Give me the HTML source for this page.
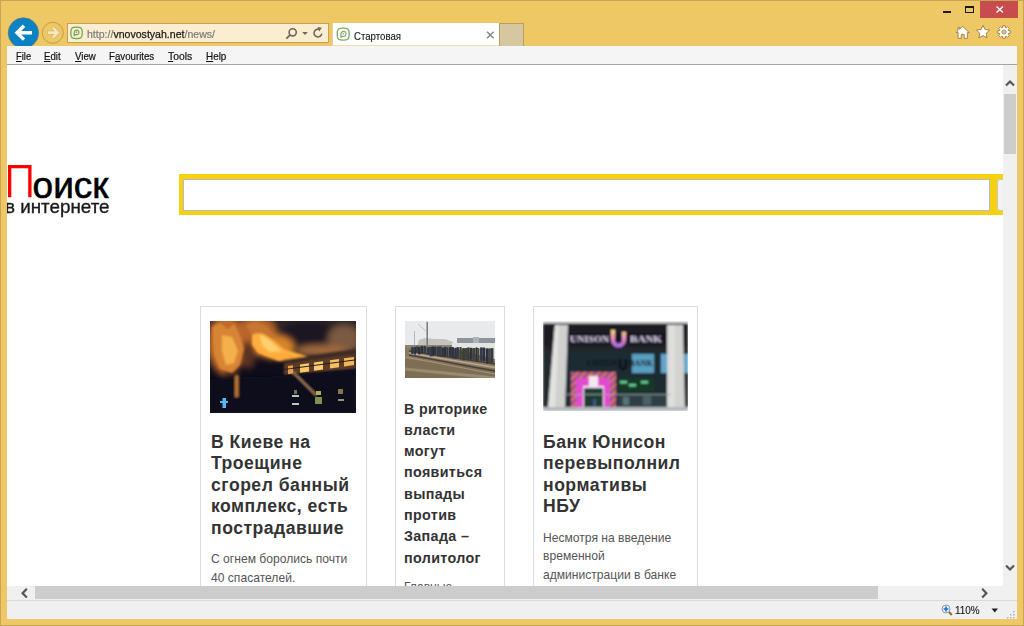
<!DOCTYPE html>
<html><head><meta charset="utf-8">
<style>
*{margin:0;padding:0;box-sizing:border-box}
html,body{width:1024px;height:626px;overflow:hidden;background:#EFC866;font-family:"Liberation Sans",sans-serif}
.abs{position:absolute}
svg{position:absolute;overflow:visible}
#frame{position:absolute;left:0;top:0;width:1024px;height:626px;background:#EFC866;border:1px solid #C9A457}
#menubar{position:absolute;left:7px;top:46px;width:1010px;height:19px;background:#F5F5F5;border-bottom:1px solid #A3A3A3}
.mi{position:absolute;top:3.5px;font-size:11px;line-height:12px;color:#111;-webkit-text-stroke:0.2px #111;transform-origin:0 0;white-space:nowrap}
.mi u{text-decoration:underline;text-underline-offset:1px;text-decoration-thickness:1px}
#content{position:absolute;left:7px;top:65px;width:996px;height:521px;background:#fff;overflow:hidden}
#vscroll{position:absolute;left:1003px;top:65px;width:14px;height:521px;background:#F0F0F0}
#hscroll{position:absolute;left:7px;top:586px;width:1010px;height:14px;background:#F0F0F0}
#status{position:absolute;left:7px;top:600px;width:1010px;height:19px;background:#F0F0F0;border-top:1px solid #DADADA}
.card{position:absolute;top:241px;border:1px solid #DDDDDD;background:#fff;height:300px}
.card h3{position:absolute;font-weight:bold;font-size:17.6px;line-height:21.4px;color:#333;letter-spacing:0.5px}
.card p{position:absolute;font-size:12.1px;line-height:18.4px;color:#555}
</style></head><body>
<div id="frame"></div>
<!-- window controls -->
<div class="abs" style="left:943px;top:11px;width:8px;height:2px;background:#1a1a1a"></div>
<div class="abs" style="left:965px;top:6px;width:9px;height:7px;border:1px solid #1a1a1a;border-top-width:2px"></div>
<div class="abs" style="left:980px;top:1px;width:38px;height:17px;background:#C84B4D"></div>
<svg style="left:996px;top:6px" width="8" height="7"><path d="M0.5 0.5L7 6.5M7 0.5L0.5 6.5" stroke="#fff" stroke-width="1.3"/></svg>
<!-- right toolbar icons -->
<svg style="left:955px;top:25px" width="16" height="15" viewBox="0 0 16 15">
  <path d="M7.6 1.3L14.2 7.6H12.3V13.4H9.2V9.4H6.2V13.4H3.1V7.6H1.1L3 5.8V2.6H4.6V4.3Z" fill="#fff" stroke="#8a6e3a" stroke-width="0.8" stroke-linejoin="round"/>
</svg>
<svg style="left:975px;top:23.5px" width="16" height="16" viewBox="0 0 16 16">
  <path d="M8.00 1.30L10.00 5.45L14.56 6.07L11.23 9.25L12.06 13.78L8.00 11.60L3.94 13.78L4.77 9.25L1.44 6.07L6.00 5.45Z" fill="#fff" stroke="#8a6e3a" stroke-width="0.8" stroke-linejoin="round"/>
</svg>
<svg style="left:996px;top:24px" width="16" height="16" viewBox="0 0 16 16">
  <path d="M12.39 6.64L14.28 6.79L14.28 9.21L12.39 9.36L12.07 10.15L13.30 11.59L11.59 13.30L10.15 12.07L9.36 12.39L9.21 14.28L6.79 14.28L6.64 12.39L5.85 12.07L4.41 13.30L2.70 11.59L3.93 10.15L3.61 9.36L1.72 9.21L1.72 6.79L3.61 6.64L3.93 5.85L2.70 4.41L4.41 2.70L5.85 3.93L6.64 3.61L6.79 1.72L9.21 1.72L9.36 3.61L10.15 3.93L11.59 2.70L13.30 4.41L12.07 5.85Z" fill="#fff" stroke="#8a6e3a" stroke-width="0.8" stroke-linejoin="round"/>
  <circle cx="8" cy="8" r="2.1" fill="#EFC866" stroke="#8a6e3a" stroke-width="0.7"/>
</svg>
<!-- nav buttons -->
<svg style="left:0;top:0" width="70" height="48">
  <circle cx="23.4" cy="33" r="15.2" fill="#0B82C4" stroke="#6A7A6A" stroke-width="0.7"/>
  <path d="M32 32.7H17.5M24 25.8L17 32.7L24 39.6" stroke="#fff" stroke-width="3.4" fill="none" stroke-linecap="butt" stroke-linejoin="miter"/>
  <circle cx="52.8" cy="32.8" r="10.5" fill="none" stroke="#BF9C4E" stroke-width="1"/>
  <path d="M47.3 32.6H57.3M53 27.9L57.7 32.6L53 37.3" stroke="#CDAE70" stroke-width="3.9" fill="none"/>
  <path d="M47.8 32.6H57.3M53 27.9L57.7 32.6L53 37.3" stroke="#F7E6BE" stroke-width="2.6" fill="none"/>
</svg>
<!-- address bar -->
<div class="abs" style="left:67px;top:23px;width:262px;height:20px;background:#FAEDD0;border:1px solid #C2A157"></div>
<svg style="left:69px;top:26px" width="15" height="14" viewBox="0 0 15 14">
  <path d="M7.55 1.2C11.8 1.2 13.3 1.6 13.3 6.9C13.3 12.2 11.8 12.6 7.55 12.6C3.3 12.6 1.8 12.2 1.8 6.9C1.8 1.6 3.3 1.2 7.55 1.2Z" fill="none" stroke="#72A652" stroke-width="1.3"/>
  <path d="M5.2 9.6L5.3 6.4A2.3 2.3 0 1 1 6.9 8.6Z" fill="none" stroke="#72A652" stroke-width="1.2" stroke-linejoin="round"/>
  <circle cx="7.4" cy="6.3" r="0.7" fill="#72A652"/>
</svg>
<div class="abs" style="left:87px;top:27.5px;font-size:11px;line-height:12px;color:#7a7a7a;-webkit-text-stroke:0.2px #7a7a7a;transform:scaleX(0.96);transform-origin:0 0;white-space:nowrap">http://<span style="color:#1a1a1a;-webkit-text-stroke:0.25px #1a1a1a">vnovostyah.net</span>/news/</div>
<svg style="left:284px;top:26px" width="40" height="14" viewBox="0 0 40 14">
  <circle cx="8.7" cy="6.3" r="3.6" fill="none" stroke="#6d675a" stroke-width="1.6"/>
  <path d="M6.2 8.8L2.3 12.6" stroke="#6d675a" stroke-width="1.8"/>
  <path d="M18.2 6H23.8L21 9Z" fill="#6d675a"/>
  <path d="M37.8 7.6A3.9 3.9 0 1 1 35.6 3.5" fill="none" stroke="#6d675a" stroke-width="1.6"/>
  <path d="M33.6 1L37.8 1.8L35.2 5.4Z" fill="#6d675a"/>
</svg>
<!-- tab -->
<div class="abs" style="left:332px;top:23px;width:167px;height:23px;background:#fff;border-left:1px solid #E6CF98;border-bottom:1px solid #EEDDB0"></div>
<svg style="left:336px;top:27px" width="15" height="15" viewBox="0 0 15 15">
  <path d="M7.2 1.2C11.6 1.2 13.2 1.6 13.2 7.2C13.2 12.8 11.6 13.2 7.2 13.2C2.8 13.2 1.2 12.8 1.2 7.2C1.2 1.6 2.8 1.2 7.2 1.2Z" fill="none" stroke="#7DAA62" stroke-width="1.3"/>
  <path d="M4.8 10.2L5 6.8A2.5 2.5 0 1 1 6.7 9.2Z" fill="none" stroke="#7DAA62" stroke-width="1.2" stroke-linejoin="round"/>
  <circle cx="7.3" cy="6.7" r="0.7" fill="#7DAA62"/>
</svg>
<div class="abs" style="left:354px;top:29.5px;font-size:11px;line-height:12px;color:#1a1a1a;-webkit-text-stroke:0.15px #1a1a1a;transform:scaleX(0.875);transform-origin:0 0;white-space:nowrap">Стартовая</div>
<svg style="left:486px;top:31px" width="9" height="8"><path d="M1 0.8L7.6 7.2M7.6 0.8L1 7.2" stroke="#8a8a8a" stroke-width="1.6"/></svg>
<div class="abs" style="left:499px;top:23px;width:25px;height:23px;background:#D6C7A1;border:1px solid #B99E5E;border-bottom:none"></div>

<div id="menubar">
<span class="mi" style="left:9px;transform:scaleX(0.85)"><u>F</u>ile</span>
<span class="mi" style="left:37px;transform:scaleX(0.88)"><u>E</u>dit</span>
<span class="mi" style="left:67.5px;transform:scaleX(0.88)"><u>V</u>iew</span>
<span class="mi" style="left:101.5px;transform:scaleX(0.88)">F<u>a</u>vourites</span>
<span class="mi" style="left:160.5px;transform:scaleX(0.94)"><u>T</u>ools</span>
<span class="mi" style="left:198.5px;transform:scaleX(0.9)"><u>H</u>elp</span>
</div>

<div id="content">
  <!-- logo -->
  <svg style="left:0;top:99px" width="26" height="34"><path d="M2.65 33.2V2.65H22.85V33.2" fill="none" stroke="#f00" stroke-width="3.3"/></svg>
  <div class="abs" style="left:25.6px;top:101.8px;font-size:37px;line-height:37px;color:#000;-webkit-text-stroke:0.6px #000">оиск</div>
  <div class="abs" style="left:-1.6px;top:131.6px;font-size:19px;line-height:19px;color:#1a1a1a;-webkit-text-stroke:0.35px #1a1a1a;transform:scaleX(0.99);transform-origin:0 0;white-space:nowrap">в интернете</div>
  <!-- search -->
  <div class="abs" style="left:172px;top:109px;width:830px;height:41px;background:#F6D10F"></div>
  <div class="abs" style="left:176px;top:114px;width:807px;height:32px;background:#fff;border:1px solid #B9B9C9"></div>
  <div class="abs" style="left:990px;top:114px;width:20px;height:32px;background:#F2F2F2;border:1px solid #C8C8C8;border-radius:3px"></div>

  <div class="card" style="left:193px;width:167px">
    <svg style="left:9px;top:14px" width="146" height="92" viewBox="0 0 146 92">
      <defs>
        <filter id="b1" x="-50%" y="-50%" width="200%" height="200%"><feGaussianBlur stdDeviation="3"/></filter>
        <filter id="b2" x="-50%" y="-50%" width="200%" height="200%"><feGaussianBlur stdDeviation="1.2"/></filter>
        <filter id="b5" x="-50%" y="-50%" width="200%" height="200%"><feGaussianBlur stdDeviation="0.6"/></filter>
        <clipPath id="c1"><rect width="146" height="92"/></clipPath>
      </defs>
      <g clip-path="url(#c1)">
      <rect width="146" height="92" fill="#0f0c1a"/>
      <g filter="url(#b1)">
        <rect x="-5" y="-5" width="160" height="40" fill="#2e2426"/>
        <ellipse cx="98" cy="12" rx="26" ry="12" fill="#1c1820"/>
        <ellipse cx="134" cy="18" rx="16" ry="14" fill="#7a5a40"/>
        <ellipse cx="112" cy="30" rx="26" ry="6" fill="#a06a3c"/>
        <ellipse cx="16" cy="24" rx="18" ry="30" fill="#c06a2c"/>
        <ellipse cx="46" cy="10" rx="20" ry="14" fill="#b8662a"/>
        <ellipse cx="64" cy="26" rx="20" ry="12" fill="#d8842e"/>
        <ellipse cx="38" cy="34" rx="8" ry="14" fill="#5a3020"/>
        <ellipse cx="20" cy="62" rx="10" ry="14" fill="#2a1a1a"/>
      </g>
      <g filter="url(#b2)">
        <path d="M2 6L10 2L18 8L24 2L30 14L34 28L30 44L22 52L10 48L4 34Z" fill="#d88436"/>
        <path d="M12 14L22 16L28 30L24 42L16 44L12 30Z" fill="#f4b04c"/>
        <path d="M36 4L46 0L58 6L64 16L56 22L44 18Z" fill="#c87430"/>
        <path d="M42 14C52 8 62 18 74 28L100 36L94 40L68 40L48 32L42 24Z" fill="#ffae3e"/>
        <path d="M50 14C58 16 64 24 72 30L60 31L52 24Z" fill="#ffd070"/>
        <path d="M72 39L146 28V33L74 43Z" fill="#3e2c22"/>
        <path d="M74 43L146 33V48L74 54Z" fill="#5c3e28"/>
      </g>
      <g filter="url(#b5)">
        <path d="M78 45L83 44.3V52.5L78 53.2Z" fill="#e8a048"/>
        <path d="M90 43.5L99 42.2V50.4L90 51.7Z" fill="#f8c868"/>
        <path d="M104 41.6L113 40.3V48.5L104 49.8Z" fill="#f8cc70"/>
        <path d="M120 39.3L129 38V46.2L120 47.5Z" fill="#f4c060"/>
        <path d="M134 37.3L144 35.9V44.1L134 45.5Z" fill="#f0b858"/>
        <path d="M74 48.5L146 38.8" stroke="#2a1e1a" stroke-width="1"/>
      </g>
      <g filter="url(#b2)">
        <path d="M0 58L40 56L74 55L146 49V92H0Z" fill="#0d0b1c"/>
        <rect x="25" y="54" width="3.5" height="22" fill="#b87434"/>
        <path d="M80 48L106 74" stroke="#d0a070" stroke-width="1.2"/>
      </g>
      <g filter="url(#b5)">
        <rect x="12.5" y="77" width="3.5" height="10" fill="#58b8f0"/>
        <rect x="10" y="80" width="8" height="2" fill="#58b8f0"/>
        <rect x="82" y="74" width="7" height="2" fill="#b8c8b8"/>
        <rect x="82" y="82" width="7" height="2" fill="#b8c8b8"/>
        <rect x="84" y="69" width="3" height="4" fill="#707060"/>
        <rect x="106" y="70" width="5" height="4" fill="#b0b058"/>
        <rect x="105" y="76" width="7" height="7" fill="#809050"/>
        <rect x="128" y="68" width="5" height="5" fill="#807848"/>
        <rect x="128" y="78" width="6" height="2" fill="#909878"/>
      </g>
      </g>
    </svg>
    <h3 style="left:10px;top:125px;width:150px">В Киеве на Троещине сгорел банный комплекс, есть пострадавшие</h3>
    <p style="left:10px;top:243.3px;width:150px">С огнем боролись почти 40 спасателей.</p>
  </div>
  <div class="card" style="left:388px;width:110px">
    <svg style="left:9px;top:14px" width="90" height="57" viewBox="0 0 90 57">
      <defs>
        <filter id="b3" x="-20%" y="-20%" width="140%" height="140%"><feGaussianBlur stdDeviation="0.6"/></filter>
        <clipPath id="c2"><rect width="90" height="57"/></clipPath>
      </defs>
      <g clip-path="url(#c2)"><g filter="url(#b3)">
      <rect width="90" height="57" fill="#e8eaeb"/>
      
      <path d="M12 25L14 19L20 17L30 18L40 18L48 21L48 26Z" fill="#c4c2be"/>
      <rect x="21.5" y="1" width="1.4" height="25" fill="#707070"/>
      <path d="M13 3L22 11" stroke="#999" stroke-width="0.5"/>
      <rect x="9" y="10" width="0.8" height="14" fill="#aaa"/>
      <rect x="52" y="17" width="38" height="8" fill="#8e949c"/>
      <rect x="68" y="16" width="6" height="9" fill="#aab2ba"/>
      <rect x="47" y="22" width="43" height="16" fill="#e4e4e2"/>
      <rect x="0" y="24" width="47" height="3" fill="#8a8478"/>
      <path d="M0 27L47 27L90 38V57H0Z" fill="#8a7a60"/>
      <path d="M0 38L90 48V57H0Z" fill="#7e6e56"/>
      <path d="M4 30L90 43" stroke="#4a4038" stroke-width="1.3"/>
      <path d="M4 34L90 50" stroke="#4a4038" stroke-width="1.3"/>
      <path d="M4 32L90 46.5" stroke="#b8a890" stroke-width="1.4"/>
      <path d="M0 36L90 53" stroke="#a89478" stroke-width="1.2"/>
      <path d="M0 48L90 57" stroke="#9a8a70" stroke-width="3"/>
      <rect x="6.0" y="25.9" width="2.9" height="7.2" rx="1" fill="#343a4a"/><rect x="9.1" y="25.7" width="2.0" height="8.1" rx="1" fill="#2c3040"/><rect x="10.9" y="25.3" width="2.2" height="6.6" rx="1" fill="#3a3e38"/><rect x="12.9" y="25.7" width="2.7" height="7.8" rx="1" fill="#2e3240"/><rect x="15.5" y="24.9" width="3.0" height="7.3" rx="1" fill="#2c3040"/><rect x="18.7" y="24.9" width="2.7" height="7.5" rx="1" fill="#363a44"/><rect x="21.9" y="26.1" width="2.9" height="7.6" rx="1" fill="#363a44"/><rect x="24.5" y="25.8" width="2.6" height="9.8" rx="1" fill="#343a4a"/><rect x="26.8" y="25.3" width="2.2" height="10.0" rx="1" fill="#2c3040"/><rect x="29.0" y="25.4" width="2.2" height="8.6" rx="1" fill="#2e3240"/><rect x="31.5" y="25.5" width="2.7" height="9.7" rx="1" fill="#343a4a"/><rect x="34.0" y="25.3" width="2.6" height="10.4" rx="1" fill="#3a3e38"/><rect x="36.5" y="26.5" width="2.3" height="9.4" rx="1" fill="#2e3240"/><rect x="38.7" y="25.7" width="2.7" height="10.1" rx="1" fill="#2c3040"/><rect x="41.4" y="26.1" width="2.1" height="9.6" rx="1" fill="#363a44"/><rect x="44.0" y="25.7" width="2.3" height="10.0" rx="1" fill="#2c3040"/><rect x="46.2" y="26.1" width="2.9" height="11.1" rx="1" fill="#2e3240"/><rect x="49.4" y="26.7" width="2.4" height="11.1" rx="1" fill="#2c3040"/><rect x="51.3" y="25.9" width="2.7" height="11.2" rx="1" fill="#363a44"/><rect x="54.4" y="25.9" width="2.4" height="11.9" rx="1" fill="#3a3e38"/><rect x="57.1" y="27.0" width="2.9" height="12.4" rx="1" fill="#3a3e38"/><rect x="59.6" y="26.9" width="3.2" height="11.5" rx="1" fill="#40443a"/><rect x="62.2" y="26.2" width="2.4" height="13.1" rx="1" fill="#3a3e38"/><rect x="64.5" y="26.8" width="3.1" height="12.0" rx="1" fill="#2e3240"/><rect x="67.3" y="27.1" width="3.2" height="12.5" rx="1" fill="#40443a"/><rect x="70.5" y="26.3" width="2.1" height="14.0" rx="1" fill="#2c3040"/><rect x="72.3" y="27.0" width="2.2" height="13.5" rx="1" fill="#40443a"/><rect x="75.0" y="26.3" width="2.6" height="13.8" rx="1" fill="#343a4a"/><rect x="77.3" y="26.4" width="3.1" height="14.1" rx="1" fill="#2e3240"/><rect x="80.8" y="27.2" width="2.8" height="15.4" rx="1" fill="#2c3040"/><rect x="83.2" y="27.2" width="2.6" height="14.7" rx="1" fill="#40443a"/><rect x="85.6" y="26.9" width="2.9" height="15.5" rx="1" fill="#343a4a"/>
      </g></g>
    </svg>
    <h3 style="left:8px;top:91.5px;width:96px;font-size:14.3px;line-height:21.3px;letter-spacing:0.35px">В риторике власти могут появиться выпады против Запада – политолог</h3>
    <p style="left:8px;top:271px;width:95px">Главные</p>
  </div>
  <div class="card" style="left:526px;width:165px">
    <svg style="left:9px;top:14px" width="145" height="90" viewBox="0 0 145 90">
      <defs>
        <filter id="b4" x="-20%" y="-20%" width="140%" height="140%"><feGaussianBlur stdDeviation="0.8"/></filter>
        <clipPath id="c3"><rect width="145" height="90"/></clipPath>
        <linearGradient id="ug" x1="0" y1="0" x2="0" y2="1"><stop offset="0" stop-color="#f8e070"/><stop offset="0.5" stop-color="#e890c0"/><stop offset="1" stop-color="#b070e0"/></linearGradient>
        <pattern id="zz" width="5" height="5" patternUnits="userSpaceOnUse" patternTransform="rotate(45)"><rect width="5" height="5" fill="#8a48a8"/><rect width="2.5" height="5" fill="#e07840"/></pattern>
      </defs>
      <g clip-path="url(#c3)"><g filter="url(#b4)">
      <rect width="145" height="90" fill="#1a1e22"/>
      <rect width="145" height="2.5" fill="#dcdcdc"/>
      <rect x="20" y="26" width="108" height="60" fill="#1e2c32"/>
      <rect x="0" y="30" width="8" height="56" fill="#222a2e"/>
      <rect x="89" y="33" width="22" height="19" fill="#5a9ec0"/>
      <rect x="118" y="33" width="27" height="19" fill="#62a6cc"/>
      <rect x="0" y="26" width="145" height="4" fill="#20282c"/>
      <text x="44" y="45" font-family="Liberation Serif" font-weight="bold" font-size="7.5" fill="#0a1014" textLength="30" lengthAdjust="spacingAndGlyphs">UNISON</text>
      <text x="86" y="45" font-family="Liberation Serif" font-weight="bold" font-size="7.5" fill="#0a1014" textLength="24" lengthAdjust="spacingAndGlyphs">BANK</text>
      <path d="M77 38V45A3 3 0 0 0 83 45V38" stroke="#0a1014" stroke-width="2.5" fill="none"/>
      <path d="M12 4H25L22 88H5Z" fill="#d0d0ce"/>
      <path d="M12 4H16L12 88H5Z" fill="#e2e2e0"/>
      <path d="M124 4H140L142 90H124Z" fill="#d2d2d0"/>
      <path d="M126 4H132L132 90H125Z" fill="#dedede"/>
      <rect x="26" y="12" width="98" height="10" fill="#16181c"/>
      <text x="27" y="20.5" font-family="Liberation Serif" font-weight="bold" font-size="9" fill="#e0d4f4" textLength="39" lengthAdjust="spacingAndGlyphs">UNISON</text>
      <text x="87" y="20.5" font-family="Liberation Serif" font-weight="bold" font-size="9" fill="#e0d4f4" textLength="32" lengthAdjust="spacingAndGlyphs">BANK</text>
      <path d="M70 9V19A5.5 5.5 0 0 0 81 19V11" stroke="url(#ug)" stroke-width="4" fill="none"/>
      <rect x="28" y="51" width="45" height="37" fill="url(#zz)"/>
      <rect x="33" y="57" width="34" height="31" fill="#e04cd0"/>
      <rect x="46" y="55" width="9" height="10" fill="#f4e8f0"/>
      <rect x="40" y="65" width="21" height="23" fill="#f0e0f0"/>
      <rect x="41" y="67" width="19" height="21" fill="#1e3a30"/>
      <rect x="50" y="78" width="3" height="8" fill="#405878"/>
      <rect x="75" y="57" width="36" height="14" fill="#183828"/>
      <rect x="77" y="60" width="7" height="2.5" fill="#68d098"/>
      <rect x="86" y="63" width="7" height="2.5" fill="#68d098"/>
      <rect x="98" y="60" width="7" height="2.5" fill="#68d098"/>
      <rect x="20" y="73" width="108" height="0.8" fill="#a0aaaa"/><rect x="75" y="74" width="49" height="11" fill="#2e4044"/><rect x="80" y="76" width="6" height="8" fill="#5a7478"/><rect x="100" y="75" width="8" height="9" fill="#4a6468"/>
      <rect x="0" y="86" width="145" height="4" fill="#b4b8bc"/>
      </g></g>
    </svg>
    <h3 style="left:9px;top:125px;width:146px">Банк Юнисон перевыполнил нормативы НБУ</h3>
    <p style="left:9px;top:221.8px;width:150px">Несмотря на введение временной администрации в банке</p>
  </div>
</div>

<div id="vscroll">
  <svg style="left:2px;top:14px" width="10" height="8"><path d="M1 6.5L5 2.5L9 6.5" stroke="#555" stroke-width="2.2" fill="none"/></svg>
  <div class="abs" style="left:1px;top:29px;width:12px;height:60px;background:#CDCDCD"></div>
  <svg style="left:2px;top:499px" width="10" height="8"><path d="M1 1.5L5 5.5L9 1.5" stroke="#555" stroke-width="2.2" fill="none"/></svg>
</div>
<div id="hscroll">
  <svg style="left:13px;top:1px" width="10" height="12"><path d="M6.8 1.8L2.6 6.2L6.8 10.6" stroke="#555" stroke-width="2.2" fill="none"/></svg>
  <div class="abs" style="left:28px;top:0px;width:843px;height:13px;background:#CDCDCD"></div>
  <svg style="left:973px;top:1px" width="10" height="12"><path d="M2.2 1.8L6.4 6.2L2.2 10.6" stroke="#555" stroke-width="2.2" fill="none"/></svg>
</div>
<div id="status">
  <svg style="left:934px;top:3px" width="14" height="14" viewBox="0 0 14 14">
    <path d="M7.6 7.6L10.8 11" stroke="#9A6A30" stroke-width="2.2"/>
    <circle cx="5" cy="5" r="4" fill="#E8F0F8" stroke="#8A9AB0" stroke-width="1"/>
    <path d="M5 2.6V7.4M2.6 5H7.4" stroke="#1A6FD0" stroke-width="1.6"/>
  </svg>
  <div class="abs" style="left:948px;top:3px;font-size:11px;line-height:12px;color:#1a1a1a;-webkit-text-stroke:0.15px #1a1a1a;transform:scaleX(0.9);transform-origin:0 0">110%</div>
  <svg style="left:984px;top:7px" width="8" height="5"><path d="M0.5 0.5H7L3.75 4.5Z" fill="#222"/></svg>
  <svg style="left:1000px;top:10px" width="9" height="8"><g fill="#B0B0B0"><rect x="6" y="0" width="1.5" height="1.5"/><rect x="3" y="3" width="1.5" height="1.5"/><rect x="6" y="3" width="1.5" height="1.5"/><rect x="0" y="6" width="1.5" height="1.5"/><rect x="3" y="6" width="1.5" height="1.5"/><rect x="6" y="6" width="1.5" height="1.5"/></g></svg>
</div>
</body></html>
